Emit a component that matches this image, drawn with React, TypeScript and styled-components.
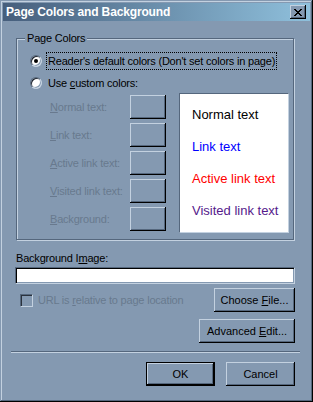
import React from 'react';
import styled, { createGlobalStyle } from 'styled-components';

const face = '#8499b1';
const light = '#c3d1e0';
const shade = '#55677d';
const dim = '#68798e';

const GlobalStyle = createGlobalStyle`
  html, body {
    margin: 0;
    background: ${face};
  }
  body {
    font-family: 'Liberation Sans', Arial, sans-serif;
    font-size: 11px;
    letter-spacing: -0.2px;
  }
`;

const Window = styled.div`
  box-sizing: border-box;
  width: 313px;
  height: 402px;
  padding: 3px;
  background: ${face};
  box-shadow:
    inset -1px -1px 0 #000,
    inset 1px 1px 0 ${face},
    inset -2px -2px 0 ${shade},
    inset 2px 2px 0 ${light};
`;

const TitleBar = styled.div`
  height: 18px;
  display: flex;
  align-items: center;
  justify-content: space-between;
  padding: 0 4px 0 3px;
  background: linear-gradient(to right, #465e7c, #8fc0dc);
`;

const Title = styled.span`
  color: #fff;
  font-weight: bold;
  font-size: 12px;
  letter-spacing: -0.15px;
`;

const CloseButton = styled.button`
  width: 16px;
  height: 14px;
  padding: 0;
  border: none;
  display: flex;
  align-items: center;
  justify-content: center;
  background: ${face};
  box-shadow:
    inset -1px -1px 0 #000,
    inset 1px 1px 0 ${light},
    inset -2px -2px 0 ${shade};
`;

const Body = styled.div`
  padding: 10px 15px 0 13px;
  display: flex;
  flex-direction: column;
`;

const GroupBox = styled.fieldset`
  margin: 0 1px 0 0;
  padding: 0;
  min-width: 0;
  border: 1px solid ${shade};
  box-shadow:
    inset 1px 1px 0 ${light},
    1px 1px 0 ${light};
`;

const GroupLegend = styled.legend`
  margin-left: 8px;
  padding: 0 2px;
  line-height: 14px;
  background: ${face};
  color: #000;
`;

const GroupContent = styled.div`
  padding: 7px 0 6px 13px;
  display: flex;
  flex-direction: column;
  gap: 4px;
`;

const RadioRow = styled.label`
  height: 18px;
  display: flex;
  align-items: center;
  color: #000;
`;

const RadioDot = styled.span<{ checked?: boolean }>`
  box-sizing: border-box;
  width: 12px;
  height: 12px;
  margin-right: 4px;
  border-radius: 50%;
  border: 1px solid;
  border-color: ${shade} ${light} ${light} ${shade};
  background: #fff;
  box-shadow:
    inset 1px 1px 0 #1f2630,
    inset -1px -1px 0 ${face};
  display: flex;
  align-items: center;
  justify-content: center;
  &::after {
    content: '';
    width: 4px;
    height: 4px;
    border-radius: 50%;
    background: ${({ checked }) => (checked ? '#000' : 'transparent')};
  }
`;

const RadioText = styled.span<{ focused?: boolean }>`
  padding: 0 1px;
  line-height: 16px;
  border: 1px dotted ${({ focused }) => (focused ? '#000' : 'transparent')};
`;

const ColorSection = styled.div`
  display: flex;
  align-items: flex-start;
  margin: -3px 0 0 20px;
`;

const ColorList = styled.div`
  display: grid;
  grid-template-columns: 80px 36px;
  grid-auto-rows: 24px;
  row-gap: 4px;
  align-items: center;
  padding-top: 2px;
`;

const DimLabel = styled.span`
  color: ${dim};
`;

const Key = styled.u`
  text-decoration: underline;
  text-underline-offset: 1px;
`;

const PushButton = styled.button<{ width: number; isDefault?: boolean }>`
  box-sizing: border-box;
  width: ${({ width }) => width}px;
  height: 24px;
  padding: 0;
  font: inherit;
  color: #000;
  background: ${face};
  border: ${({ isDefault }) => (isDefault ? '1px solid #000' : 'none')};
  box-shadow:
    inset -1px -1px 0 #000,
    inset 1px 1px 0 ${light},
    inset -2px -2px 0 ${shade};
`;

const Preview = styled.div`
  box-sizing: border-box;
  width: 110px;
  height: 140px;
  margin-left: 13px;
  padding: 13px 0 0 12px;
  background: #fff;
  border: 1px solid;
  border-color: ${shade} ${light} ${light} ${shade};
  display: flex;
  flex-direction: column;
  gap: 16px;
`;

const PreviewText = styled.span<{ color: string }>`
  font-size: 13px;
  line-height: 16px;
  letter-spacing: 0;
  color: ${({ color }) => color};
`;

const FieldLabel = styled.label`
  margin-top: 11px;
  line-height: 14px;
  color: #000;
`;

const TextInput = styled.input`
  box-sizing: border-box;
  width: calc(100% + 1px);
  height: 17px;
  margin: 2px 0 0 -1px;
  border: 1px solid;
  border-color: ${shade} ${light} ${light} ${shade};
  box-shadow:
    inset 1px 1px 0 #000,
    inset -1px -1px 0 ${face};
  background: #fff;
  outline: none;
`;

const OptionRow = styled.div`
  margin-top: 4px;
  display: flex;
  align-items: center;
  justify-content: space-between;
`;

const CheckRow = styled.label`
  display: flex;
  align-items: center;
  gap: 5px;
  margin-left: 4px;
  color: ${dim};
`;

const CheckBox = styled.span`
  box-sizing: border-box;
  width: 13px;
  height: 13px;
  border: 1px solid;
  border-color: ${shade} ${light} ${light} ${shade};
  box-shadow:
    inset 1px 1px 0 #2a323d,
    inset -1px -1px 0 ${face};
  background: ${face};
`;

const RightRow = styled.div<{ top: number }>`
  margin-top: ${({ top }) => top}px;
  display: flex;
  justify-content: flex-end;
  gap: 11px;
`;

const Separator = styled.div`
  margin: 8px -5px 0;
  height: 1px;
  background: ${shade};
  border-bottom: 1px solid ${light};
`;

const colorRows = [
  { key: 'N', rest: 'ormal text:' },
  { key: 'L', rest: 'ink text:' },
  { key: 'A', rest: 'ctive link text:' },
  { key: 'V', rest: 'isited link text:' },
  { key: 'B', rest: 'ackground:' },
];

const previews = [
  { text: 'Normal text', color: '#000' },
  { text: 'Link text', color: '#0000ff' },
  { text: 'Active link text', color: '#ff0000' },
  { text: 'Visited link text', color: '#551a8b' },
];

const App: React.FC = () => (
  <>
    <GlobalStyle />
    <Window>
      <TitleBar>
        <Title>Page Colors and Background</Title>
        <CloseButton aria-label="Close">
          <svg width="8" height="7" viewBox="0 0 8 7" shapeRendering="crispEdges">
            <path
              fill="#000"
              d="M0 0h2v1H0zM6 0h2v1H6zM1 1h2v1H1zM5 1h2v1H5zM2 2h4v1H2zM3 3h2v1H3zM2 4h4v1H2zM1 5h2v1H1zM5 5h2v1H5zM0 6h2v1H0zM6 6h2v1H6z"
            />
          </svg>
        </CloseButton>
      </TitleBar>
      <Body>
        <GroupBox>
          <GroupLegend>Page Colors</GroupLegend>
          <GroupContent>
            <RadioRow>
              <RadioDot checked />
              <RadioText focused>Reader's default colors (Don't set colors in page)</RadioText>
            </RadioRow>
            <RadioRow>
              <RadioDot />
              <RadioText>
                Use <Key>c</Key>ustom colors:
              </RadioText>
            </RadioRow>
            <ColorSection>
              <ColorList>
                {colorRows.map((row) => (
                  <React.Fragment key={row.key}>
                    <DimLabel>
                      <Key>{row.key}</Key>
                      {row.rest}
                    </DimLabel>
                    <PushButton width={36} disabled />
                  </React.Fragment>
                ))}
              </ColorList>
              <Preview>
                {previews.map((p) => (
                  <PreviewText key={p.text} color={p.color}>
                    {p.text}
                  </PreviewText>
                ))}
              </Preview>
            </ColorSection>
          </GroupContent>
        </GroupBox>
        <FieldLabel>
          Background I<Key>m</Key>age:
        </FieldLabel>
        <TextInput />
        <OptionRow>
          <CheckRow>
            <CheckBox />
            <span>
              URL is <Key>r</Key>elative to page location
            </span>
          </CheckRow>
          <PushButton width={81}>
            Choose <Key>F</Key>ile...
          </PushButton>
        </OptionRow>
        <RightRow top={7}>
          <PushButton width={96}>
            Advanced <Key>E</Key>dit...
          </PushButton>
        </RightRow>
        <Separator />
        <RightRow top={9}>
          <PushButton width={69} isDefault>
            OK
          </PushButton>
          <PushButton width={69}>Cancel</PushButton>
        </RightRow>
      </Body>
    </Window>
  </>
);

export default App;
